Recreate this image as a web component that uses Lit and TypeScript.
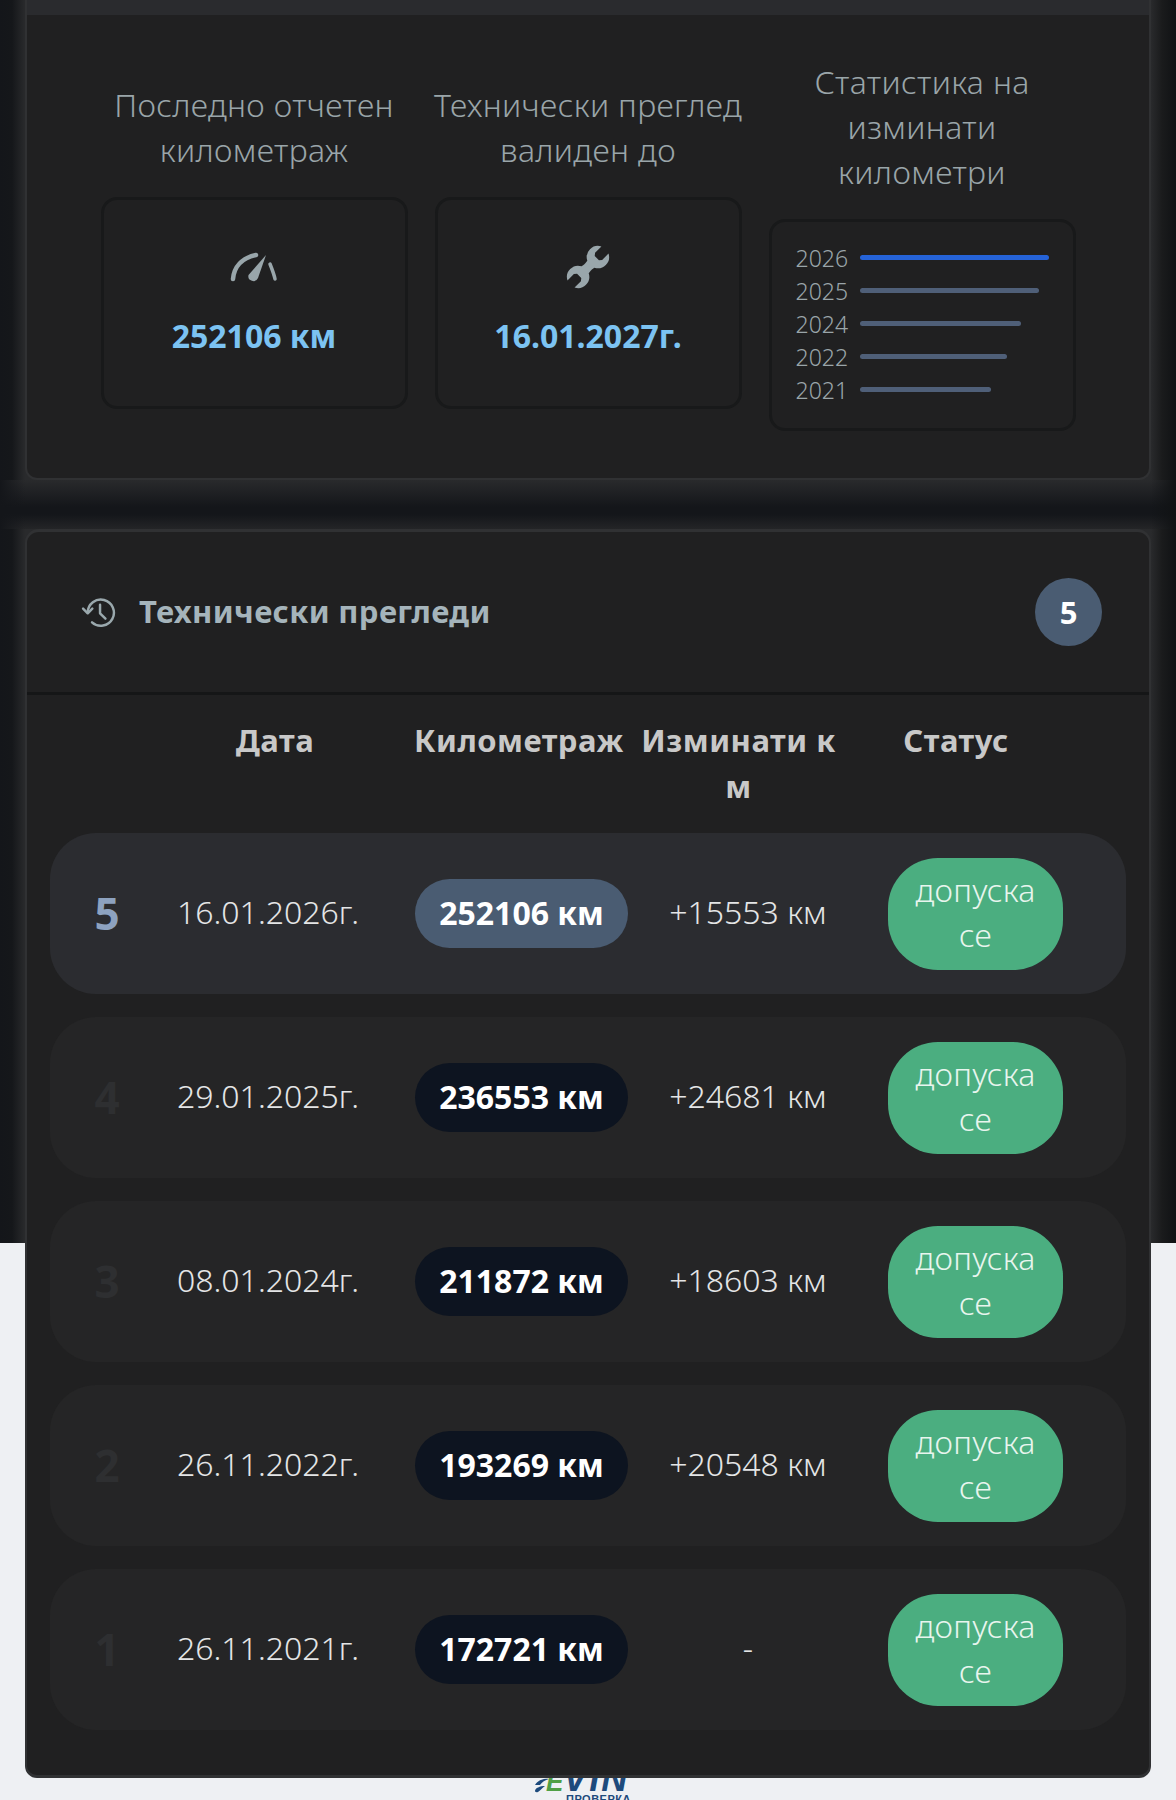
import { LitElement, html, css, svg } from 'lit';
import { customElement } from 'lit/decorators.js';

interface Inspection {
  num: number;
  date: string;
  km: number;
  delta: string;
}

const inspections: Inspection[] = [
  { num: 5, date: '16.01.2026г.', km: 252106, delta: '+15553 км' },
  { num: 4, date: '29.01.2025г.', km: 236553, delta: '+24681 км' },
  { num: 3, date: '08.01.2024г.', km: 211872, delta: '+18603 км' },
  { num: 2, date: '26.11.2022г.', km: 193269, delta: '+20548 км' },
  { num: 1, date: '26.11.2021г.', km: 172721, delta: '-' },
];

const years = [
  { year: 2026, width: 191 },
  { year: 2025, width: 179 },
  { year: 2024, width: 161 },
  { year: 2022, width: 147 },
  { year: 2021, width: 131 },
];

const gaugeIcon = svg`
  <path d="M4 29C5 17 13 8 27 5" fill="none" stroke="currentColor" stroke-width="4.5" stroke-linecap="round"/>
  <path d="M37 5L29 28a5 5 0 0 1-9.500-3Z" fill="currentColor"/>
  <path d="M41 14C43 19 45 24 46 29" fill="none" stroke="currentColor" stroke-width="3.500" stroke-linecap="round"/>
`;

const wrenchIcon = svg`
  <g transform="rotate(45 23 23)">
    <path fill="currentColor" d="M18 -1V8L20 10.500H26L28 8V-1A11.200 11.200 0 0 1 28 19L27.500 22V24L28 27A11.200 11.200 0 0 1 28 47V38L26 35.500H20L18 38V47A11.200 11.200 0 0 1 18 27L18.500 24V22L18 19A11.200 11.200 0 0 1 18 -1Z"/>
  </g>
`;

const historyIcon = svg`
  <g fill="none" stroke="currentColor" stroke-width="1.600" stroke-linecap="round" stroke-linejoin="round">
    <path d="M5 12a8.500 8.500 0 1 1 2.800 6.400"/>
    <path d="M2 9.500L5 12.500L8 9.500"/>
    <path d="M13 7v5.500l3.500 3.500"/>
  </g>
`;

const swooshIcon = svg`
  <path d="M0 7C3 2 9 0 14 1C10 2 7 4 5 7Z" fill="#1d4a7c"/>
  <path d="M0 13C0 10 5 8 10 8C7 10 6 12 3 14C1 14.500 0 14 0 13Z" fill="#1d4a7c"/>
`;

@customElement('app-root')
export class AppRoot extends LitElement {
  static styles = css`
    :host {
      display: block;
      height: 1800px;
      overflow: hidden;
      font-family: 'Noto Sans', 'Open Sans', sans-serif;
      background: linear-gradient(#15171a 0 1243px, #eef0f3 1243px);
      color: #e4e5e6;
    }
    .sides {
      background:
        linear-gradient(90deg, #14161a 0, #15171a 12px, #292a2c 25px, #292a2c 1151px, #1a1b1c 1162px, #101214 1176px)
        0 0 / 100% 1243px no-repeat;
    }
    .card {
      margin: 0 25px;
      background: #202021;
      border: 0 solid #303133;
      border-width: 0 2px 2px;
      border-radius: 0 0 12px 12px;
    }
    .strip {
      height: 15px;
      background: #2a2b2e;
    }
    .summary {
      display: grid;
      grid-template-columns: repeat(3, 307px);
      gap: 27px;
      justify-content: center;
      align-items: center;
      padding: 44px 0 47px;
    }
    .stat {
      display: flex;
      flex-direction: column;
      align-items: center;
      gap: 25px;
    }
    .label {
      font-size: 32px;
      letter-spacing: 0.35px;
      font-weight: 300;
      line-height: 45px;
      text-align: center;
      white-space: nowrap;
      color: #9aa5a9;
    }
    .box {
      box-sizing: border-box;
      width: 307px;
      height: 212px;
      border: 3px solid #18191a;
      border-radius: 16px;
      display: flex;
      flex-direction: column;
      align-items: center;
      color: #99a6ab;
    }
    .box svg {
      display: block;
      margin-top: 44px;
      height: 46px;
    }
    .value {
      margin-top: 24px;
      font-size: 32px;
      font-weight: 700;
      line-height: 44px;
      color: #7cc3f2;
    }
    .chart {
      display: block;
      padding: 19px 24px;
    }
    .chart-row {
      display: flex;
      align-items: center;
      gap: 12px;
      height: 33px;
      font-size: 23px;
      font-weight: 300;
      color: #9aa5a9;
    }
    .bar {
      height: 5px;
      border-radius: 3px;
      background: #4f5f78;
    }
    .bar.current {
      background: #2563d8;
    }
    .gap {
      height: 49px;
      background:
        linear-gradient(90deg, #14161a 0, #14161a00 25px, #14161a00 1151px, #101214 1176px),
        linear-gradient(#292a2c, #14161a 55%, #14161a 70%, #242527);
    }
    .history {
      border-width: 3px 2px 3px;
      border-radius: 14px 14px 12px 12px;
      height: 1249px;
      box-sizing: border-box;
    }
    .history-head {
      box-sizing: border-box;
      height: 163px;
      display: flex;
      align-items: center;
      padding: 0 47px 0 53px;
      border-bottom: 3px solid #151617;
    }
    .history-head svg {
      width: 37px;
      height: 37px;
      color: #9aa8ad;
    }
    .title {
      flex: 1;
      margin-left: 22px;
      padding-bottom: 2px;
      font-size: 31px;
      letter-spacing: 0.36px;
      font-weight: 700;
      color: #a5b4bb;
    }
    .badge {
      width: 67px;
      height: 68px;
      border-radius: 50%;
      display: flex;
      align-items: center;
      justify-content: center;
      background: #4a5c72;
      color: #fff;
      font-size: 31px;
      font-weight: 700;
    }
    .thead {
      display: grid;
      grid-template-columns: 114px 222px 250px 205px 230px;
      padding: 22px 0 24px 23px;
      font-size: 31px;
      letter-spacing: 0.5px;
      font-weight: 700;
      line-height: 46px;
      color: #c8c8c8;
      text-align: center;
    }
    .thead .km-col {
      text-align: left;
      padding-left: 28px;
    }
    .rows {
      display: flex;
      flex-direction: column;
      gap: 23px;
      padding: 0 23px;
    }
    .row {
      height: 161px;
      display: grid;
      grid-template-columns: 114px 240px 246px 218px 258px;
      align-items: center;
      border-radius: 46px;
      background: #252526;
      font-size: 32px;
      font-weight: 300;
    }
    .row.latest {
      background: #2b2c30;
    }
    .num {
      text-align: center;
      padding-bottom: 2px;
      font-size: 44px;
      font-weight: 700;
      color: #2e2f31;
    }
    .latest .num {
      color: #8da2bf;
    }
    .date {
      padding: 0 0 4px 13px;
    }
    .km {
      box-sizing: border-box;
      margin-left: 11px;
      width: 213px;
      height: 69px;
      padding-bottom: 3px;
      border-radius: 35px;
      display: flex;
      align-items: center;
      justify-content: center;
      background: #0d1420;
      color: #fff;
      font-weight: 700;
    }
    .latest .km {
      background: #4a5c72;
    }
    .delta {
      text-align: center;
      padding: 0 22px 4px 0;
    }
    .status {
      box-sizing: border-box;
      margin-left: 20px;
      width: 175px;
      height: 112px;
      padding: 0 24px 4px;
      border-radius: 50px;
      display: flex;
      align-items: center;
      text-align: center;
      background: #4bae80;
      color: #e8f5ee;
      letter-spacing: 0.3px;
      line-height: 45px;
    }
    .footer {
      margin-left: 535px;
      height: 22px;
      overflow: hidden;
      display: flex;
      color: #1d4a7c;
    }
    .footer svg {
      width: 14px;
      height: 15px;
      flex: none;
      margin-right: -3px;
    }
    .logo {
      margin-top: -17px;
      line-height: 1;
      font-family: 'Liberation Sans', sans-serif;
      font-weight: 700;
      font-style: italic;
      font-size: 36px;
      letter-spacing: 2px;
    }
    .logo b {
      font-size: 26px;
      letter-spacing: 0;
      color: #4f9f45;
    }
    .logo small {
      display: block;
      margin: -3px 0 0 20px;
      font-size: 11px;
      letter-spacing: 0.5px;
      font-style: normal;
    }
  `;

  private renderRow(item: Inspection) {
    return html`
      <div class="row ${item.num === 5 ? 'latest' : ''}">
        <div class="num">${item.num}</div>
        <div class="date">${item.date}</div>
        <div class="km">${item.km} км</div>
        <div class="delta">${item.delta}</div>
        <div class="status">допуска се</div>
      </div>
    `;
  }

  render() {
    return html`
      <div class="sides">
        <section class="card">
          <div class="strip"></div>
          <div class="summary">
            <div class="stat">
              <div class="label">Последно отчетен<br />километраж</div>
              <div class="box">
                <svg viewBox="0 0 50 34" width="50">${gaugeIcon}</svg>
                <div class="value">252106 км</div>
              </div>
            </div>
            <div class="stat">
              <div class="label">Технически преглед<br />валиден до</div>
              <div class="box">
                <svg viewBox="0 0 46 46" width="46">${wrenchIcon}</svg>
                <div class="value">16.01.2027г.</div>
              </div>
            </div>
            <div class="stat">
              <div class="label">Статистика на<br />изминати<br />километри</div>
              <div class="box chart">
                ${years.map(
                  (y, i) => html`
                    <div class="chart-row">
                      <span>${y.year}</span>
                      <div class="bar ${i === 0 ? 'current' : ''}" style="width:${y.width}px"></div>
                    </div>
                  `,
                )}
              </div>
            </div>
          </div>
        </section>
        <div class="gap"></div>
        <section class="card history">
          <header class="history-head">
            <svg viewBox="0 0 24 24">${historyIcon}</svg>
            <div class="title">Технически прегледи</div>
            <div class="badge">5</div>
          </header>
          <div class="thead">
            <div></div>
            <div>Дата</div>
            <div class="km-col">Километраж</div>
            <div>Изминати к<br />м</div>
            <div>Статус</div>
          </div>
          <div class="rows">${inspections.map((item) => this.renderRow(item))}</div>
        </section>
      </div>
      <footer class="footer">
        <svg viewBox="0 0 14 15">${swooshIcon}</svg>
        <div class="logo"><b>E</b>VIN<small>ПРОВЕРКА</small></div>
      </footer>
    `;
  }
}
